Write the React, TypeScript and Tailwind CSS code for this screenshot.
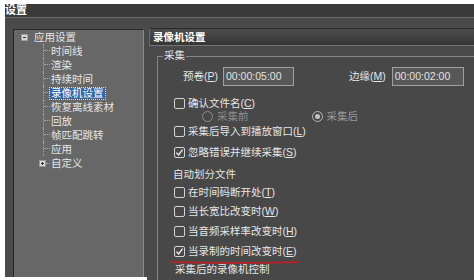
import React from "react";

function Box({ checked }: { checked?: boolean }) {
  return (
    <span className="w-[11px] h-[11px] border border-[#d4d4d4] rounded-[2px] flex items-center justify-center shrink-0">
      {checked && (
        <svg width="9" height="9" viewBox="0 0 9 9">
          <path d="M1.4 4.6 L3.6 7 L7.6 1.6" stroke="#ececec" strokeWidth="1.4" fill="none" />
        </svg>
      )}
    </span>
  );
}

function Radio({ on }: { on?: boolean }) {
  return (
    <span
      className={
        on
          ? "w-[11px] h-[11px] rounded-full border-[1.5px] border-[#b8b8b8] flex items-center justify-center shrink-0"
          : "w-[11px] h-[11px] rounded-full border border-[#8e8e8e] flex items-center justify-center shrink-0"
      }
    >
      {on && <span className="w-[5px] h-[5px] rounded-full bg-[#c4c4c4]" />}
    </span>
  );
}

function L({ t, k }: { t: string; k: string }) {
  return (
    <span className="whitespace-nowrap">
      {t}(<span className="underline underline-offset-1">{k}</span>)
    </span>
  );
}

function CheckRow({ t, k, checked, mt }: { t: string; k: string; checked?: boolean; mt: string }) {
  return (
    <div className={"h-[13px] flex items-center gap-[3px] pl-[16px] " + mt}>
      <Box checked={checked} />
      <L t={t} k={k} />
    </div>
  );
}

function Child({ t, sel }: { t: string; sel?: boolean }) {
  return (
    <div className="h-[14px] flex items-stretch pl-[29px]">
      <div className="w-[7px] flex flex-col border-l border-dotted border-[#a8a8a8] shrink-0">
        <div className="h-[7px] border-b border-dotted border-[#a8a8a8]" />
      </div>
      <div className="flex items-center">
        {sel ? (
          <span className="bg-[#3466a8] text-white px-[1px] outline outline-1 outline-dotted outline-[#c8d8f0] leading-[11px]">
            {t}
          </span>
        ) : (
          <span className="px-[1px]">{t}</span>
        )}
      </div>
    </div>
  );
}

export default function App() {
  return (
    <div className="w-[474px] h-[280px] bg-white overflow-hidden pt-[4px] pl-[5px] font-['Liberation_Sans','Noto_Sans_CJK_SC',sans-serif] text-[10.5px] leading-[13px] text-[#e6e6e6]">
      <div className="h-[276px] flex flex-col">
        <div className="h-[14px] bg-[#3a3a3a] border-b border-[#6c6c6c] text-white font-bold text-[11px] leading-[12px] shrink-0">
          设置
        </div>
        <div className="flex flex-1 items-start">
          {/* left column */}
          <div className="w-[142px] h-[259px] bg-[#4a4a4a] pl-[8px] pt-[11px] shrink-0">
            <div className="w-[131px] h-[248px] bg-[#676767] border-l border-t border-[#262626] border-r border-r-[#8c8c8c] pt-[0px]">
              <div className="h-[14px] flex items-center pl-[7px]">
                <span className="w-[7px] h-[7px] bg-[#d8d8d8] border border-[#9a9a9a] flex items-center justify-center shrink-0">
                  <span className="w-[3px] h-[1px] bg-[#333]" />
                </span>
                <span className="ml-[6px]">应用设置</span>
              </div>
              <Child t="时间线" />
              <Child t="渲染" />
              <Child t="持续时间" />
              <Child t="录像机设置" sel />
              <Child t="恢复离线素材" />
              <Child t="回放" />
              <Child t="帧匹配跳转" />
              <Child t="应用" />
              <div className="h-[15px] flex items-center pl-[25px]">
                <span className="w-[7px] h-[7px] bg-[#d8d8d8] border border-[#9a9a9a] flex items-center justify-center relative shrink-0">
                  <span className="w-[3px] h-[1px] bg-[#333]" />
                  <span className="absolute w-[1px] h-[3px] bg-[#333]" />
                </span>
                <span className="w-[4px] border-t border-dotted border-[#a8a8a8]" />
                <span className="ml-[1px]">自定义</span>
              </div>
            </div>
          </div>
          {/* right column */}
          <div className="flex-1 h-[262px] bg-[#4a4a4a] flex flex-col pt-[10px]">
            <div className="h-[18px] ml-[2px] border-t border-[#2a2a2a] border-b border-b-[#767676] border-l border-l-[#6a6a6a] bg-gradient-to-b from-[#4c4c4c] to-[#363636] text-white font-bold pl-[3px] leading-[16px] shrink-0">
              录像机设置
            </div>
            <div className="relative ml-[10px] mt-[10px] flex-1 border-l border-t border-[#858585] bg-[#484848]">
              <span className="absolute -top-[8px] left-[5px] px-[1px] bg-[#484848] text-[#e6e6e6]">采集</span>

              <div className="h-[19px] mt-[10px] flex items-center pl-[25px]">
                <L t="预卷" k="P" />
                <div className="ml-[5px] w-[71px] h-[19px] border border-[#a0a0a0] bg-[#585858] pl-[2px] flex items-center text-[#e2e2e2]">
                  00:00:05:00
                </div>
                <span className="ml-[55px]">
                  <L t="边缘" k="M" />
                </span>
                <div className="ml-[6px] w-[72px] h-[19px] border border-[#a0a0a0] bg-[#585858] pl-[2px] flex items-center text-[#e2e2e2]">
                  00:00:02:00
                </div>
              </div>

              <CheckRow t="确认文件名" k="C" mt="mt-[11px]" />
              <div className="h-[13px] flex items-center pl-[44px] text-[#8c8c8c]">
                <Radio />
                <span className="ml-[4px]">采集前</span>
                <span className="ml-[63px]">
                  <Radio on />
                </span>
                <span className="ml-[4px] text-[#9a9a9a]">采集后</span>
              </div>
              <CheckRow t="采集后导入到播放窗口" k="L" mt="mt-[2px]" />
              <CheckRow t="忽略错误并继续采集" k="S" checked mt="mt-[8px]" />
              <div className="h-[13px] mt-[9px] pl-[15px] flex items-center">自动划分文件</div>
              <CheckRow t="在时间码断开处" k="T" mt="mt-[5px]" />
              <CheckRow t="当长宽比改变时" k="W" mt="mt-[6px]" />
              <CheckRow t="当音频采样率改变时" k="H" mt="mt-[7px]" />
              <CheckRow t="当录制的时间改变时" k="E" checked mt="mt-[7px]" />
              <div className="h-[13px] mt-[5px] pl-[17px] flex items-center">采集后的录像机控制</div>

              <svg className="absolute left-[13px] top-[203px]" width="128" height="5" viewBox="0 0 128 5">
                <path d="M1 2 Q64 4 127 2" stroke="#b0242a" strokeWidth="2" fill="none" strokeLinecap="round" />
              </svg>
            </div>
          </div>
        </div>
      </div>
    </div>
  );
}
